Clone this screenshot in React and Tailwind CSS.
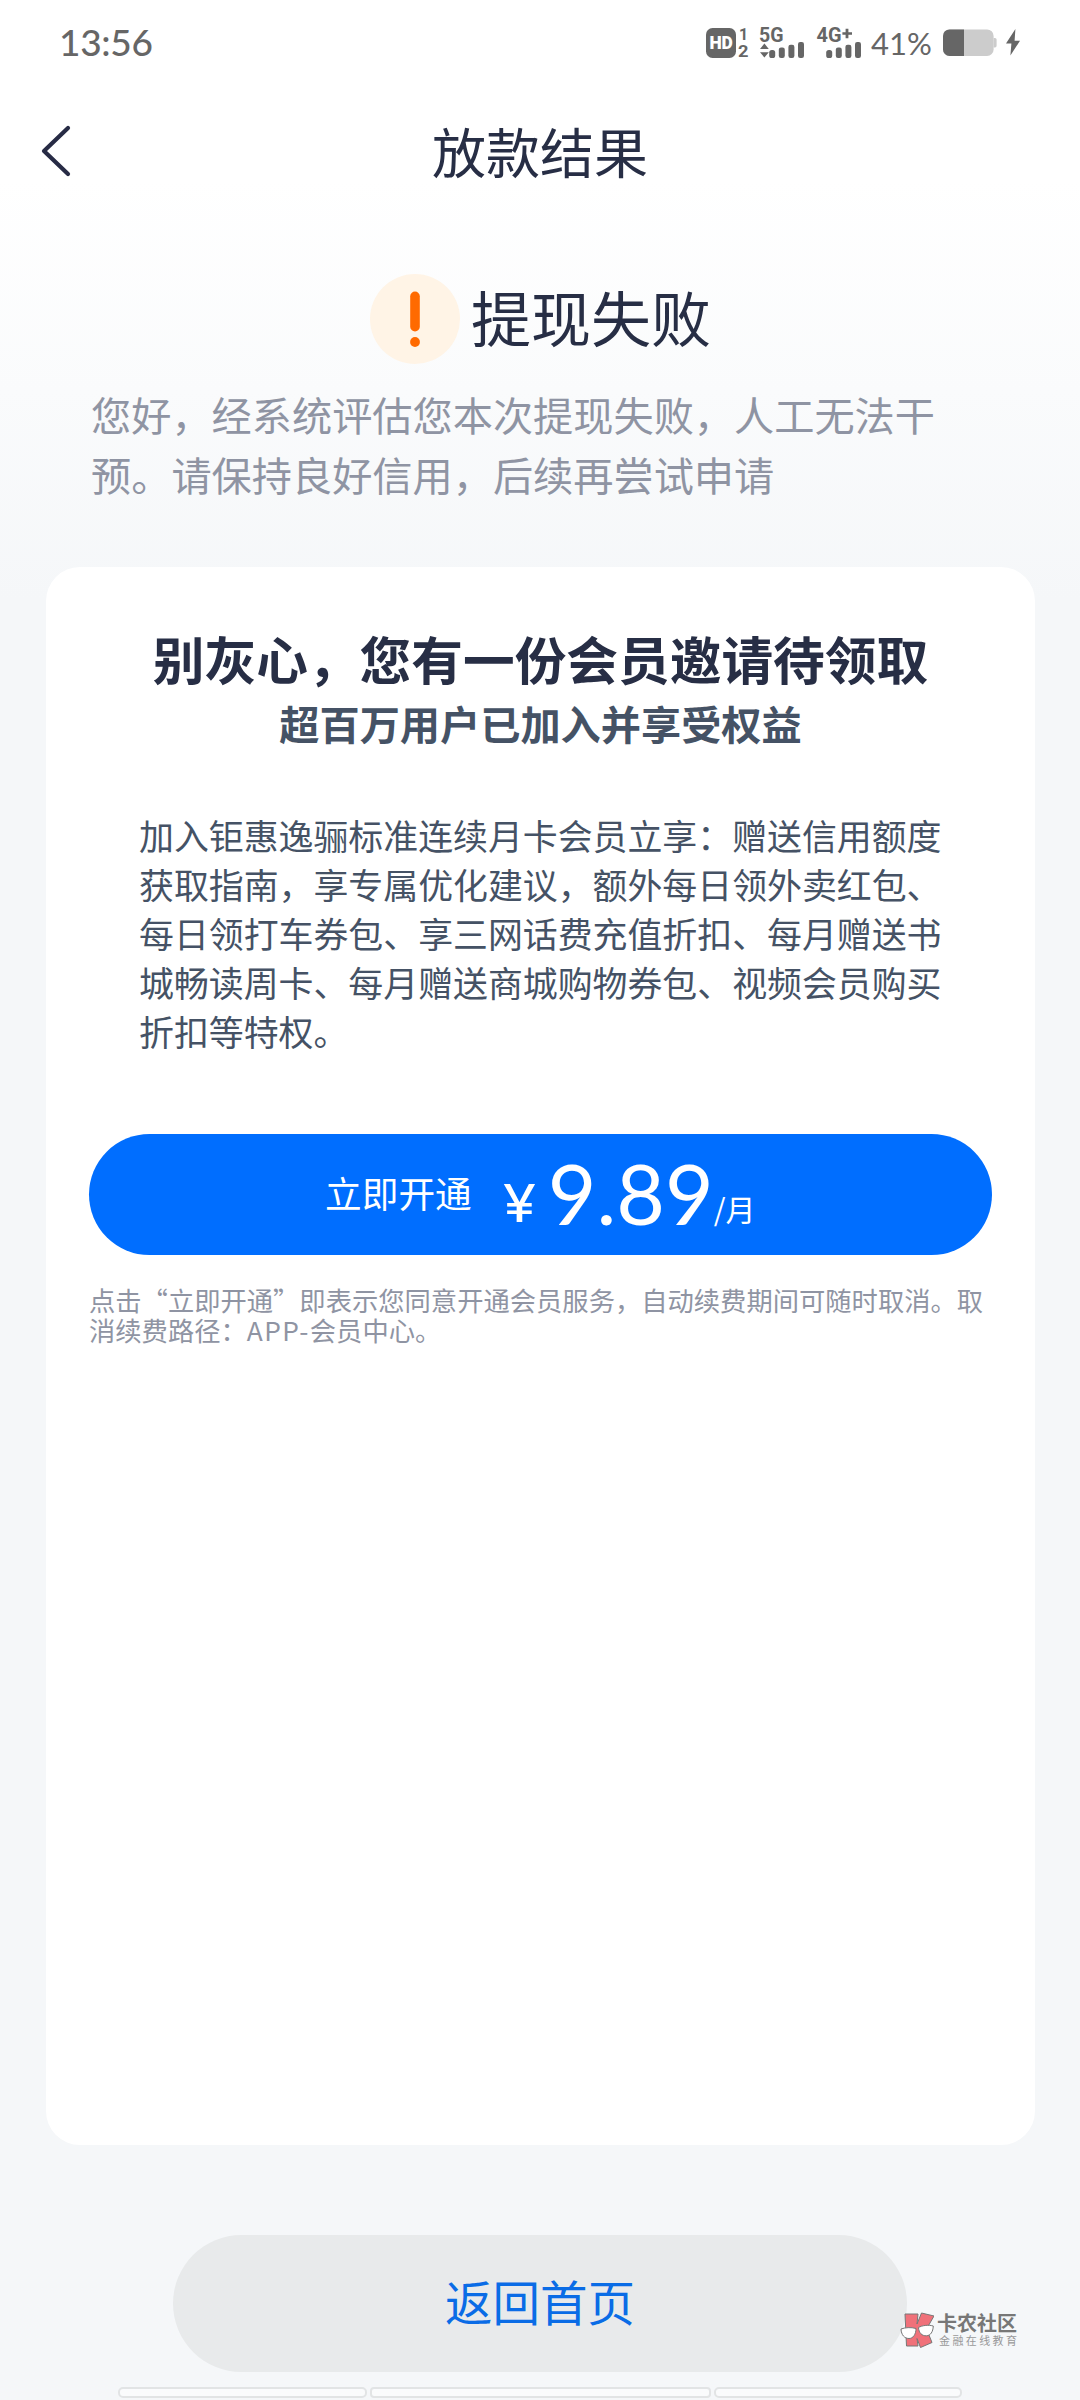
import React from 'react'

const NOTICE = ['您好，经系统评估您本次提现失败，人工无法干', '预。请保持良好信用，后续再尝试申请']

const BENEFITS = [
  '加入钜惠逸骊标准连续月卡会员立享：赠送信用额度',
  '获取指南，享专属优化建议，额外每日领外卖红包、',
  '每日领打车券包、享三网话费充值折扣、每月赠送书',
  '城畅读周卡、每月赠送商城购物券包、视频会员购买',
  '折扣等特权。',
]

function Lines({ rows }) {
  return rows.map((row) => (
    <span key={row} className="block whitespace-nowrap">{row}</span>
  ))
}

function Signal({ x }) {
  return (
    <g>
      <rect x={x} y="22" width="6" height="8" rx="2.6" />
      <rect x={x + 9.6} y="19.5" width="6" height="10.5" rx="2.2" />
      <rect x={x + 19.2} y="16.8" width="6" height="13.2" rx="2.2" />
      <rect x={x + 28.8} y="14" width="6" height="16" rx="2.2" />
    </g>
  )
}

function NetworkIcons() {
  return (
    <svg width="156" height="30" viewBox="0 0 156 30" fill="#666" className="overflow-visible font-['Roboto'] font-bold">
      {/* HD voice, sim 1 / 2 */}
      <rect x="0" y="0" width="30" height="30" rx="6.5" />
      <text x="3.4" y="21.4" fontSize="18" fontWeight="900" fill="#fff" textLength="23.5" lengthAdjust="spacingAndGlyphs">HD</text>
      <text x="33" y="12" fontSize="16">1</text>
      <text x="32" y="29.4" fontSize="16" textLength="10.5" lengthAdjust="spacingAndGlyphs">2</text>

      {/* 5G */}
      <text x="53" y="14.4" fontSize="19.5" textLength="24.5" lengthAdjust="spacingAndGlyphs">5G</text>
      <path d="M58.4 15.6 62.8 21H54zM58.4 29.6 62.8 24.2H54z" />
      <Signal x={63.2} />

      {/* 4G+ */}
      <text x="110.6" y="14.4" fontSize="19.5" textLength="25" lengthAdjust="spacingAndGlyphs">4G</text>
      <path d="M139.6 .8h2.8v3.4h3.6v2.6h-3.6v3.4h-2.8V6.8h-3.2V4.2h3.2z" />
      <Signal x={120.2} />
    </svg>
  )
}

function Battery() {
  return (
    <svg width="78" height="28" viewBox="0 0 78 28">
      <rect x="0" y="0.4" width="50.6" height="26.6" rx="6.5" fill="#ccc" />
      <path d="M6.5 .4H21V27H6.5A6.5 6.5 0 0 1 0 20.5V6.9A6.5 6.5 0 0 1 6.5.4z" fill="#666" />
      <path d="M50.6 9h1.4a1.6 1.6 0 0 1 1.6 1.6v6.2a1.6 1.6 0 0 1-1.6 1.6h-1.4z" fill="#ccc" />
      <path d="M72.4 0 63 14.6h5.4L67.4 26.4 77 11.8h-5.4z" fill="#666" />
    </svg>
  )
}

function StatusBar() {
  return (
    <div className="flex h-[86px] items-center pl-[59px] pr-[59px] text-[#666]">
      <span className="-mt-[2px] font-['Lato'] text-[37px] font-medium tracking-[-0.3px]">13:56</span>
      <div className="ml-auto flex items-center">
        <NetworkIcons />
        <span className="ml-[9px] w-[72px] whitespace-nowrap font-['Lato'] text-[31px]">41%</span>
        <Battery />
      </div>
    </div>
  )
}

function NavBar() {
  return (
    <div className="relative flex h-[132px] items-center justify-center">
      <svg width="30" height="54" viewBox="0 0 30 54" className="absolute left-[41px] top-[38px]">
        <path d="M27 4 3 27 27 50" fill="none" stroke="#272b45" strokeWidth="4.2" strokeLinecap="round" strokeLinejoin="round" />
      </svg>
      <h1 className="-mt-[3px] text-[54px] leading-none text-[#272e45]">放款结果</h1>
    </div>
  )
}

function Watermark() {
  return (
    <div className="absolute left-[900px] top-[2311px] flex">
      <svg width="34" height="38" viewBox="0 0 34 38" stroke="#777" strokeWidth="1">
        <path d="M5 3H18L17 13 21.5 2 34 5 26.5 18 32 31.5 20.5 36.5 17 27.5 18 35H6.5z" fill="#f0717a" />
        <path d="M1 18C5 16.5 11 16 16 17.5 16 23.5 13 27.5 9 27.5 4.5 27.5 1.3 24 1 18z" fill="#fff" />
        <path d="M18.5 16.5C22 14.5 28 13.5 33.3 15 33 21 30.5 24.5 26.5 24.8 22 25 18.8 22 18.5 16.5z" fill="#fff" />
      </svg>
      <div className="ml-[3px] flex flex-col whitespace-nowrap">
        <span className="mt-[2px] text-[20px] font-bold leading-[20px] text-[#777]">卡农社区</span>
        <span className="ml-[2px] mt-[2px] text-[11px] leading-[11px] tracking-[2.4px] text-[#999]">金融在线教育</span>
      </div>
    </div>
  )
}

export default function App() {
  return (
    <div className="relative flex h-[2400px] w-[1080px] flex-col overflow-hidden bg-[#f5f7f9] bg-[linear-gradient(180deg,#ffffff_0px,#ffffff_180px,#f5f7f9_600px)] font-['Noto_Sans_CJK_SC',sans-serif]">
      <StatusBar />
      <NavBar />

      <div className="mt-[55px] flex h-[91px] items-center justify-center gap-[11px] pl-[1px]">
        <svg width="90" height="90" viewBox="0 0 90 90">
          <circle cx="45" cy="45" r="45" fill="#fff4e6" />
          <rect x="40.2" y="17.5" width="9.6" height="40" rx="4.8" fill="#ff6a00" />
          <circle cx="45" cy="68" r="4.9" fill="#ff6a00" />
        </svg>
        <h2 className="-mt-[6px] text-[60px] leading-none text-[#272e45]">提现失败</h2>
      </div>

      <p className="mt-[20px] pl-[91px] text-[40.2px] leading-[60px] text-[#8f94a3]">
        <Lines rows={NOTICE} />
      </p>

      <section className="ml-[46px] mt-[63px] h-[1578px] w-[989px] shrink-0 rounded-[34px] bg-white px-[43px] pt-[59px]">
        <h3 className="text-center text-[51.7px] font-bold leading-[64px] text-[#272e45]">别灰心，您有一份会员邀请待领取</h3>
        <p className="mt-[1px] text-center text-[40.2px] font-bold leading-[64px] text-[#455265]">超百万用户已加入并享受权益</p>

        <p className="mt-[56px] pl-[50px] text-[34.9px] leading-[49px] text-[#455265]">
          <Lines rows={BENEFITS} />
        </p>

        <button className="mt-[78px] flex h-[121px] w-[903px] rounded-full bg-[#006eff] pl-[236px] text-white">
          <span className="mt-[39px] text-[36.7px] leading-[38px]">立即开通</span>
          <span className="ml-[31px] mt-[46px] w-[45px] text-left">
            <span className="inline-block origin-left scale-x-115 font-['Inter'] text-[52px] leading-[48px]">¥</span>
          </span>
          <span className="mt-[15px] w-[166px] whitespace-nowrap font-['Lato'] text-[84px] leading-[88px]">9.89</span>
          <span className="mt-[58px] whitespace-nowrap text-[30px] leading-[32px]">/月</span>
        </button>

        <div className="mt-[30px] whitespace-nowrap text-[26.3px] leading-[30px] text-[#8f94a3]">
          <p>点击“立即开通”即表示您同意开通会员服务，自动续费期间可随时取消。取</p>
          <p>消续费路径：<span className="tracking-[1.4px]">APP-</span>会员中心。</p>
        </div>
      </section>

      <button className="ml-[173px] mt-[90px] h-[137px] w-[734px] shrink-0 rounded-full bg-[#e8eaeb] pb-[5px] text-[47.5px] leading-none text-[#0a6ce6]">
        返回首页
      </button>

      <div className="ml-[118px] mt-[15px] flex h-[11px] shrink-0 gap-[3px]">
        <div className="w-[249px] rounded-[5px] border-2 border-[#e2e4e5] bg-[#fafbfc]" />
        <div className="w-[341px] rounded-[4px] border-2 border-[#e2e4e5] bg-[#fafbfc]" />
        <div className="w-[248px] rounded-[5px] border-2 border-[#e2e4e5] bg-[#fafbfc]" />
      </div>

      <Watermark />
    </div>
  )
}
